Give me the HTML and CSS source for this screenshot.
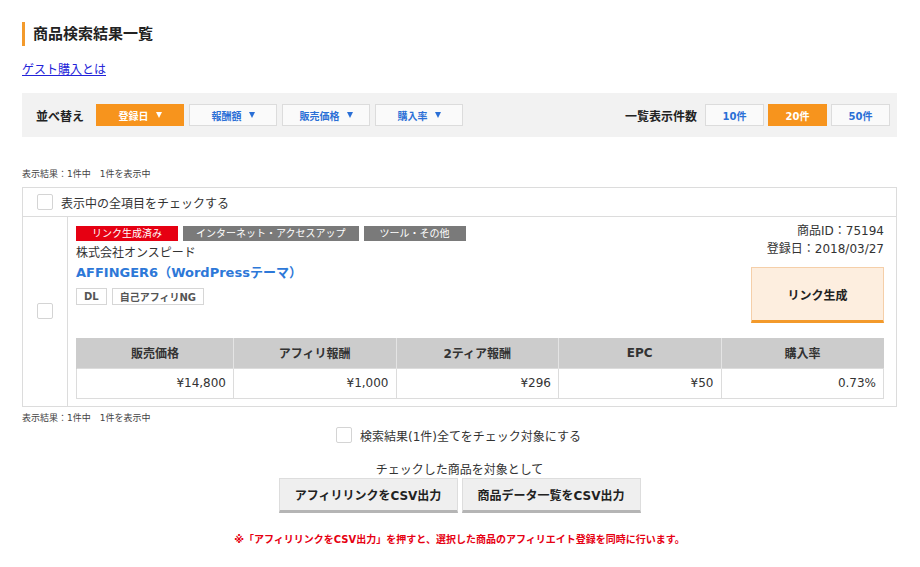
FILE: index.html
```html
<!DOCTYPE html>
<html lang="ja">
<head>
<meta charset="utf-8">
<title>商品検索結果一覧</title>
<link rel="stylesheet" href="styles.css">
</head>
<body>
<div class="page">
  <h1 class="page-title">商品検索結果一覧</h1>
  <div class="guest"><a href="#" class="guest-link">ゲスト購入とは</a></div>

  <div class="sortbar">
    <div class="sort-group">
      <span class="bar-label">並べ替え</span>
      <a class="sbtn sbtn-active">登録日<span class="arrow"></span></a>
      <a class="sbtn">報酬額<span class="arrow"></span></a>
      <a class="sbtn">販売価格<span class="arrow"></span></a>
      <a class="sbtn">購入率<span class="arrow"></span></a>
    </div>
    <div class="count-group">
      <span class="bar-label">一覧表示件数</span>
      <a class="cbtn">10件</a>
      <a class="cbtn cbtn-active">20件</a>
      <a class="cbtn">50件</a>
    </div>
  </div>

  <div class="result-info result-info-top">表示結果：1件中　1件を表示中</div>

  <div class="results">
    <div class="results-head">
      <span class="check"></span>
      <span class="head-text">表示中の全項目をチェックする</span>
    </div>
    <div class="item">
      <div class="item-check"><span class="check"></span></div>
      <div class="item-body">
        <div class="item-top">
          <div class="item-info">
            <div class="tags">
              <span class="tag tag-red">リンク生成済み</span>
              <span class="tag tag-gray">インターネット・アクセスアップ</span>
              <span class="tag tag-gray">ツール・その他</span>
            </div>
            <div class="company">株式会社オンスピード</div>
            <div class="product-name">AFFINGER6（WordPressテーマ）</div>
            <div class="labels">
              <span class="label">DL</span>
              <span class="label">自己アフィリNG</span>
            </div>
          </div>
          <div class="item-side">
            <div class="meta">商品ID：75194</div>
            <div class="meta">登録日：2018/03/27</div>
            <a class="link-btn">リンク生成</a>
          </div>
        </div>
        <table class="price-table">
          <thead>
            <tr>
              <th class="c1">販売価格</th>
              <th>アフィリ報酬</th>
              <th>2ティア報酬</th>
              <th>EPC</th>
              <th>購入率</th>
            </tr>
          </thead>
          <tbody>
            <tr>
              <td>¥14,800</td>
              <td>¥1,000</td>
              <td>¥296</td>
              <td>¥50</td>
              <td>0.73%</td>
            </tr>
          </tbody>
        </table>
      </div>
    </div>
  </div>

  <div class="result-info result-info-bottom">表示結果：1件中　1件を表示中</div>

  <div class="check-all">
    <span class="check"></span>
    <span class="check-all-text">検索結果(1件)全てをチェック対象にする</span>
  </div>

  <div class="export-caption">チェックした商品を対象として</div>
  <div class="export-buttons">
    <a class="ebtn">アフィリリンクをCSV出力</a>
    <a class="ebtn">商品データ一覧をCSV出力</a>
  </div>
  <div class="notice">※「アフィリリンクをCSV出力」を押すと、選択した商品のアフィリエイト登録を同時に行います。</div>
</div>
</body>
</html>
```

FILE: styles.css
```css
* { box-sizing: border-box; }

html, body {
  margin: 0;
  padding: 0;
  background: #fff;
}

body {
  font-family: "DejaVu Sans", "Noto Sans CJK JP", sans-serif;
  color: #333;
  font-size: 12px;
}

.page {
  width: 920px;
  padding: 22px 23px 0 22px;
}

.page-title {
  margin: 0;
  height: 24px;
  line-height: 24px;
  border-left: 3px solid #f39a2b;
  padding-left: 8px;
  font-size: 15px;
  font-weight: bold;
  color: #222;
}

.guest {
  margin-top: 17px;
  line-height: 14px;
  font-size: 12px;
}

.guest-link {
  color: #2323d8;
  text-decoration: underline;
}

.sortbar {
  margin-top: 16px;
  height: 44px;
  background: #f2f2f2;
  display: flex;
  align-items: center;
  justify-content: space-between;
  padding: 0 7px 0 14px;
}

.sort-group, .count-group {
  display: flex;
  align-items: center;
}

.bar-label {
  font-size: 12px;
  font-weight: bold;
  color: #222;
}

.sort-group .bar-label { margin-right: 12px; }
.count-group .bar-label { margin-right: 4px; }

.sbtn, .cbtn {
  display: flex;
  align-items: center;
  justify-content: center;
  height: 22px;
  background: #fafafa;
  border: 1px solid #dcdcdc;
  color: #2a6fd6;
  font-size: 10px;
  font-weight: bold;
  text-decoration: none;
}

.arrow {
  display: inline-block;
  width: 0;
  height: 0;
  margin-left: 7px;
  border-left: 3.5px solid transparent;
  border-right: 3.5px solid transparent;
  border-top: 6px solid currentColor;
}

.sbtn { width: 88px; margin-right: 5px; }
.sbtn:last-child { margin-right: 0; }

.cbtn { width: 59px; margin-left: 4px; }

.sbtn-active, .cbtn-active {
  background: #f7941d;
  border-color: #f7941d;
  color: #fff;
}

.result-info {
  font-size: 9px;
  line-height: 12px;
  color: #444;
}

.result-info-top { margin-top: 31px; }
.result-info-bottom { margin-top: 5px; }

.results {
  margin-top: 7px;
  border: 1px solid #dcdcdc;
}

.check {
  display: inline-block;
  width: 16px;
  height: 16px;
  border: 1px solid #d4d4d4;
  border-radius: 2px;
  background: #fff;
  flex: none;
}

.results-head {
  height: 29px;
  display: flex;
  align-items: center;
  padding-left: 14px;
  border-bottom: 1px solid #dcdcdc;
}

.head-text {
  margin-left: 8px;
  font-size: 12px;
  color: #333;
}

.item {
  display: flex;
}

.item-check {
  width: 45px;
  border-right: 1px solid #dcdcdc;
  display: flex;
  align-items: center;
  padding-left: 14px;
}

.item-body {
  flex: 1;
  padding: 5px 12px 7px 8px;
}

.item-top {
  display: flex;
  justify-content: space-between;
}

.tags {
  margin-top: 4px;
  display: flex;
  gap: 5px;
}

.tag {
  min-width: 102px;
  height: 15px;
  padding: 0 13px;
  display: flex;
  align-items: center;
  justify-content: center;
  color: #fff;
  font-size: 10px;
  line-height: 15px;
}

.tag-red { background: #e60012; }
.tag-gray { background: #7a7a7a; }

.company {
  margin-top: 3px;
  line-height: 18px;
  font-size: 12px;
  color: #333;
}

.product-name {
  line-height: 22px;
  font-size: 13px;
  font-weight: bold;
  color: #2d78d8;
}

.labels {
  margin-top: 4px;
  display: flex;
  gap: 5px;
}

.label {
  height: 17px;
  padding: 0 7px;
  border: 1px solid #d6d6d6;
  display: flex;
  align-items: center;
  font-size: 10px;
  font-weight: bold;
  color: #555;
}

.item-side {
  width: 133px;
  display: flex;
  flex-direction: column;
  align-items: flex-end;
}

.meta {
  line-height: 18px;
  font-size: 12px;
  color: #333;
  white-space: nowrap;
}

.link-btn {
  margin-top: 9px;
  width: 133px;
  height: 56px;
  background: #fdeedf;
  border: 1px solid #f5cfa9;
  border-bottom: 3px solid #f39a2b;
  display: flex;
  align-items: center;
  justify-content: center;
  font-size: 12px;
  font-weight: bold;
  color: #222;
}

.price-table {
  margin-top: 15px;
  width: 100%;
  border-collapse: collapse;
  table-layout: fixed;
}

.price-table th {
  height: 30px;
  background: #cccccc;
  border-left: 1px solid #e4e4e4;
  font-size: 12px;
  font-weight: bold;
  color: #333;
  text-align: center;
  padding: 0;
}

.price-table th:first-child { border-left: 1px solid #cccccc; }
.price-table th.c1 { width: 157px; }

.price-table td {
  height: 30px;
  border: 1px solid #dcdcdc;
  font-size: 12px;
  color: #333;
  text-align: right;
  padding: 0 7px 0 0;
}

.check-all {
  margin-top: 3px;
  display: flex;
  justify-content: center;
  align-items: center;
  padding-right: 2px;
}

.check-all-text {
  margin-left: 8px;
  font-size: 12px;
  color: #333;
}

.export-caption {
  margin-top: 18px;
  text-align: center;
  line-height: 16px;
  font-size: 12px;
  color: #333;
}

.export-buttons {
  margin-top: 0;
  display: flex;
  justify-content: center;
  gap: 4px;
}

.ebtn {
  width: 179px;
  height: 35px;
  background: #efefef;
  border: 1px solid #dddddd;
  border-bottom: 3px solid #b5b5b5;
  display: flex;
  align-items: center;
  justify-content: center;
  font-size: 12px;
  font-weight: bold;
  color: #222;
}

.notice {
  margin-top: 20px;
  text-align: center;
  line-height: 14px;
  font-size: 10px;
  font-weight: bold;
  color: #e60012;
}
```
